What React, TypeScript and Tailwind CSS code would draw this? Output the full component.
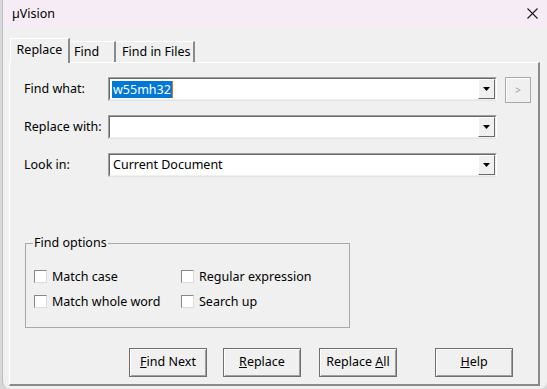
import React from "react";

function Combo({ children, selected }: { children?: React.ReactNode; selected?: boolean }) {
  return (
    <div className="h-[24px] w-[389px] border border-t-[#a0a0a0] border-l-[#a0a0a0] border-r-white border-b-[#e3e3e3] flex">
      <div className="flex-1 flex border border-t-[#696969] border-l-[#696969] border-r-[#f0f0f0] border-b-[#f0f0f0] bg-white">
        <div className="flex-1 flex items-center pl-[2px] pt-[1px]">
          {selected ? (
            <span className="bg-[#0078d7] text-white leading-[17px] h-[17px] px-px border-r border-[#e07020]">{children}</span>
          ) : (
            <span className="pl-px">{children}</span>
          )}
        </div>
        <div className="w-[17px] h-[20px] bg-[#f0f0f0] border border-t-white border-l-white border-r-[#696969] border-b-[#696969] flex items-center justify-center">
          <svg width="7" height="4" viewBox="0 0 7 4">
            <path d="M0 0H7L3.5 4Z" fill="#000" />
          </svg>
        </div>
      </div>
    </div>
  );
}

function Check({ label }: { label: string }) {
  return (
    <div className="flex items-center h-[13px]">
      <div className="w-[13px] h-[13px] bg-white border border-t-[#888] border-l-[#888] border-r-[#dcdcdc] border-b-[#dcdcdc]" />
      <span className="ml-[5px] leading-[13px]">{label}</span>
    </div>
  );
}

function Btn({ children, className = "" }: { children: React.ReactNode; className?: string }) {
  return (
    <div
      className={
        "w-[78px] h-[29px] border border-[#6e6e6e] bg-[#f0f0f0] flex items-center justify-center shadow-[inset_1px_1px_0_#ffffff,inset_-1px_-1px_0_#a0a0a0] " +
        className
      }
    >
      {children}
    </div>
  );
}

export default function App() {
  return (
    <div className="w-[547px] h-[389px] bg-[#d8d8d8] font-['Noto_Sans',sans-serif] text-[12.5px] text-black overflow-hidden">
      <div className="ml-[2px] w-[545px] h-[389px] bg-[#f0f0f0] rounded-b-[8px] flex flex-col overflow-hidden border-l border-[#bdbdbd]">
        {/* title bar */}
        <div className="h-[28px] bg-[#f5ecf5] flex items-center justify-between pl-[9px] pr-[9px] shrink-0">
          <span className="leading-none">µVision</span>
          <svg width="11" height="11" viewBox="0 0 11 11" className="mt-[-1px]">
            <path d="M0.5 0.5L10.5 10.5M10.5 0.5L0.5 10.5" stroke="#1a1a1a" strokeWidth="1.1" />
          </svg>
        </div>
        {/* tabs */}
        <div className="flex items-end mt-[10px] ml-[7px] h-[24px] shrink-0">
          <div className="w-[60px] h-[25px] border-t border-l border-white border-r-2 border-r-[#8a8a8a] bg-[#f0f0f0] flex items-center justify-center relative z-10 mb-[-1px] pb-[1px]">
            Replace
          </div>
          <div className="w-[46px] h-[21px] border-t border-white border-r-2 border-r-[#8a8a8a] flex items-center pl-[4px]">
            Find
          </div>
          <div className="w-[79px] h-[21px] border-t border-white border-r-2 border-r-[#8a8a8a] flex items-center pl-[6px]">
            Find in Files
          </div>
        </div>
        {/* panel */}
        <div className="ml-[6px] w-[531px] h-[324px] border-t border-l border-white border-r-2 border-b-2 border-r-[#8a8a8a] border-b-[#8a8a8a] flex flex-col pl-[14px] pt-[14px]">
          <div className="flex items-center h-[24px]">
            <span className="w-[84px]">Find what:</span>
            <Combo selected>w55mh32</Combo>
            <div className="ml-[8px] w-[26px] h-[26px] mt-[2px] border border-[#a8a8a8] shadow-[inset_1px_1px_0_#ffffff] flex items-center justify-center text-[#a0a0a0] text-[10px]">
              &gt;
            </div>
          </div>
          <div className="flex items-center h-[24px] mt-[14px]">
            <span className="w-[84px]">Replace with:</span>
            <Combo />
          </div>
          <div className="flex items-center h-[24px] mt-[14px]">
            <span className="w-[84px]">Look in:</span>
            <Combo>Current Document</Combo>
          </div>
          {/* group */}
          <div className="mt-[66px] ml-[1px] w-[325px] h-[85px] border border-[#a8a8a8] relative">
            <span className="absolute left-[7px] top-[-9px] bg-[#f0f0f0] px-px leading-[16px]">Find options</span>
            <div className="grid grid-cols-[147px_1fr] gap-y-[12px] pl-[8px] pt-[26px]">
              <Check label="Match case" />
              <Check label="Regular expression" />
              <Check label="Match whole word" />
              <Check label="Search up" />
            </div>
          </div>
          {/* buttons */}
          <div className="flex mt-[20px] ml-[105px]">
            <Btn>
              <span><u>F</u>ind Next</span>
            </Btn>
            <Btn className="ml-[16px]">
              <span><u>R</u>eplace</span>
            </Btn>
            <Btn className="ml-[18px]">
              <span>Replace <u>A</u>ll</span>
            </Btn>
            <Btn className="ml-[38px]">
              <span><u>H</u>elp</span>
            </Btn>
          </div>
        </div>
      </div>
    </div>
  );
}
